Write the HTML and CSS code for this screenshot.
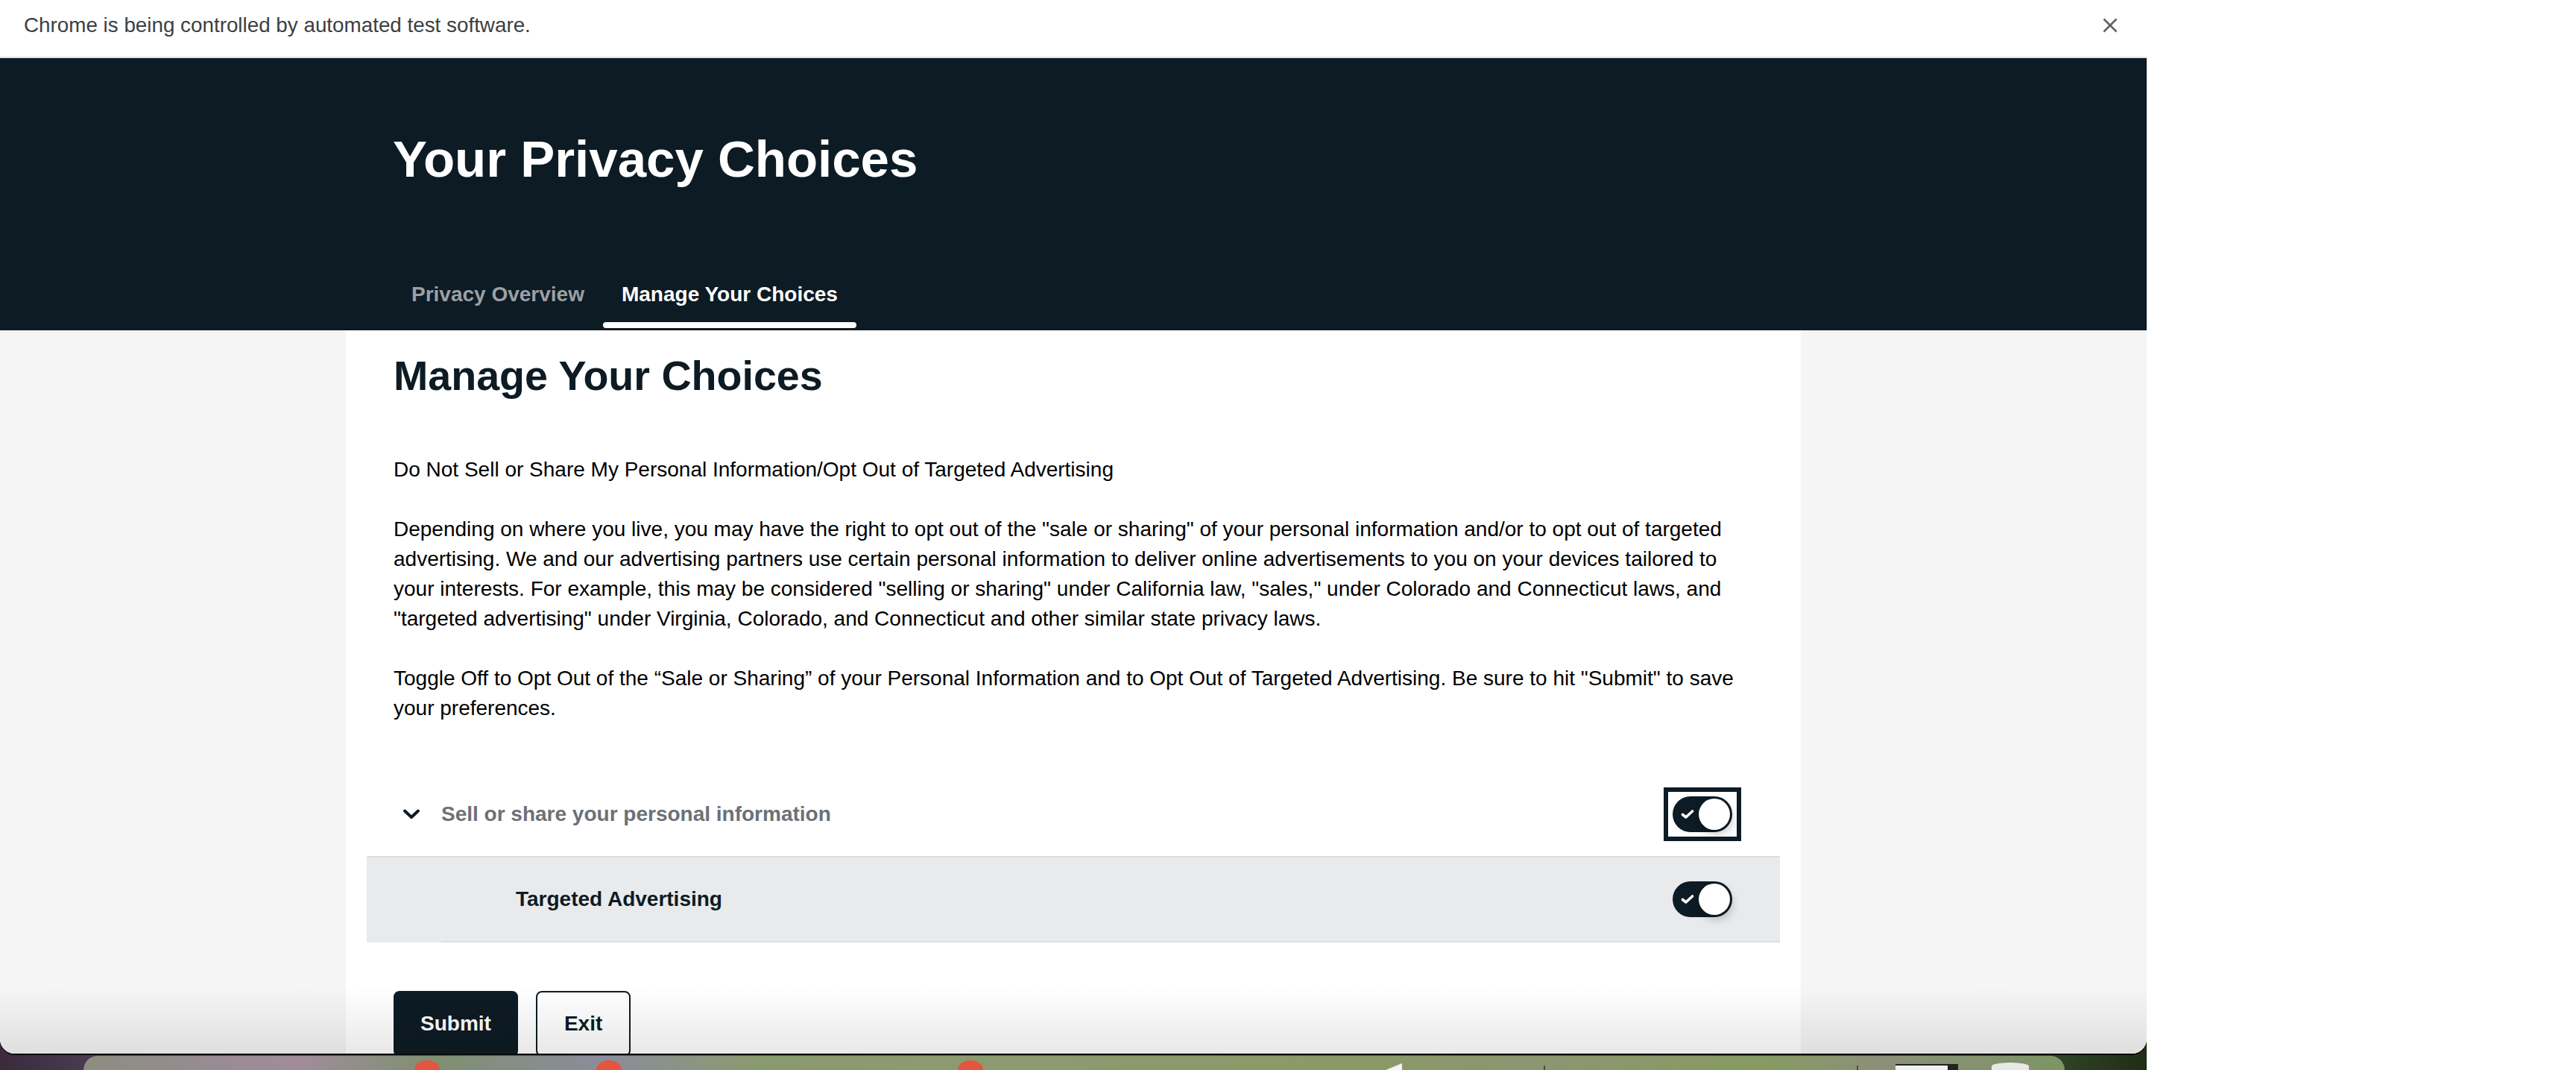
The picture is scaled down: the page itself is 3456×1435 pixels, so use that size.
FILE: index.html
```html
<!DOCTYPE html>
<html lang="en">
<head>
<meta charset="utf-8">
<title>Your Privacy Choices</title>
<link rel="stylesheet" href="styles.css">
</head>
<body>
<div class="screen">
  <div class="desk">
    <div class="window">
      <div class="infobar">
        <span>Chrome is being controlled by automated test software.</span>
        <svg class="close" width="20" height="20" viewBox="0 0 20 20"><path d="M1.5 1.5 L18.5 18.5 M18.5 1.5 L1.5 18.5" stroke="#5f6368" stroke-width="2.6" fill="none"/></svg>
      </div>
      <div class="viewport">
        <header class="hero">
          <div class="hero-inner">
            <h1>Your Privacy Choices</h1>
            <nav class="tabs">
              <a class="tab"><span class="tab-label">Privacy Overview</span></a>
              <a class="tab active"><span class="tab-label">Manage Your Choices</span></a>
            </nav>
          </div>
        </header>
        <main class="main">
          <section class="panel">
            <h2>Manage Your Choices</h2>
            <div class="intro">
              <p>Do Not Sell or Share My Personal Information/Opt Out of Targeted Advertising</p>
              <p>Depending on where you live, you may have the right to opt out of the "sale or sharing" of your personal information and/or to opt out of targeted advertising. We and our advertising partners use certain personal information to deliver online advertisements to you on your devices tailored to your interests. For example, this may be considered "selling or sharing" under California law, "sales," under Colorado and Connecticut laws, and "targeted advertising" under Virginia, Colorado, and Connecticut and other similar state privacy laws.</p>
              <p>Toggle Off to Opt Out of the “Sale or Sharing” of your Personal Information and to Opt Out of Targeted Advertising. Be sure to hit "Submit" to save your preferences.</p>
            </div>
            <div class="accordion">
              <div class="acc-head">
                <svg class="chevron" width="24" height="16" viewBox="0 0 24 16"><path d="M3 3.5 L12 12 L21 3.5" stroke="#0d1b24" stroke-width="4" fill="none" stroke-linecap="round" stroke-linejoin="round"/></svg>
                <span class="acc-title">Sell or share your personal information</span>
                <span class="focus-ring">
                  <span class="toggle">
                    <svg class="check" width="18" height="14" viewBox="0 0 18 14"><path d="M2.5 7.5 L6.8 11 L15.5 3" stroke="#fff" stroke-width="3.6" fill="none" stroke-linecap="round" stroke-linejoin="round"/></svg>
                    <span class="knob"></span>
                  </span>
                </span>
              </div>
              <div class="acc-body">
                <div class="subrow">
                  <span class="sub-title">Targeted Advertising</span>
                  <span class="toggle">
                    <svg class="check" width="18" height="14" viewBox="0 0 18 14"><path d="M2.5 7.5 L6.8 11 L15.5 3" stroke="#fff" stroke-width="3.6" fill="none" stroke-linecap="round" stroke-linejoin="round"/></svg>
                    <span class="knob"></span>
                  </span>
                </div>
              </div>
            </div>
            <div class="actions">
              <button class="btn btn-primary">Submit</button>
              <button class="btn btn-secondary">Exit</button>
            </div>
          </section>
        </main>
        <div class="fade"></div>
      </div>
    </div>
    <div class="strip">
      <div class="dock">
        <span class="drop drop-1"></span>
        <span class="drop drop-2"></span>
        <span class="drop drop-3"></span>
        <span class="peak"></span>
        <span class="sep sep-1"></span>
        <span class="sep sep-2"></span>
        <span class="mini-win"></span>
        <span class="mini-icon"></span>
      </div>
    </div>
  </div>
  <div class="outside"></div>
</div>
</body>
</html>
```

FILE: styles.css
```css
html, body {
  margin: 0;
  padding: 0;
}
body {
  width: 3456px;
  height: 1435px;
  overflow: hidden;
  background: #fff;
  font-family: "Liberation Sans", Arial, Helvetica, sans-serif;
}
.screen {
  display: flex;
  height: 1435px;
}
.desk {
  width: 2880px;
  flex: none;
  display: flex;
  flex-direction: column;
  background: linear-gradient(90deg, #3a2a3c 0, #4a3a50 112px, #55604a 1400px, #2f4224 2770px, #1e2d17 2880px);
}
.outside {
  flex: 1;
  background: #fff;
}
.window {
  height: 1413px;
  flex: none;
  display: flex;
  flex-direction: column;
  background: #fff;
  border-radius: 0 0 20px 20px;
  overflow: hidden;
  box-shadow: 0 2px 0 #0b0b0b;
  position: relative;
  z-index: 1;
}
.infobar {
  height: 68px;
  flex: none;
  border-bottom: 2px solid #dfe1e4;
  display: flex;
  align-items: center;
  justify-content: space-between;
  padding: 0 39px 8px 32px;
  font-size: 27.8px;
  color: #3c4043;
  background: #fff;
}
.close {
  display: block;
}
.viewport {
  flex: 1;
  position: relative;
  overflow: hidden;
  background: #f5f5f5;
}
.hero {
  background: #0d1b24;
  height: 365px;
}
.hero-inner {
  width: 1952px;
  margin: 0 auto;
  padding: 96px 64px 0 63px;
  box-sizing: border-box;
}
.hero h1 {
  margin: 0;
  font-size: 69px;
  line-height: 80px;
  font-weight: 700;
  color: #fff;
}
.tabs {
  display: flex;
  margin-top: 121px;
}
.tab {
  display: flex;
  flex-direction: column;
  font-size: 28px;
  line-height: 40px;
  font-weight: 700;
  color: #9ba0a5;
}
.tab-label {
  padding: 0 25px;
}
.tab::after {
  content: "";
  height: 8px;
  margin-top: 17px;
  border-radius: 4px;
  background: transparent;
}
.tab.active {
  color: #fff;
}
.tab.active::after {
  background: #fff;
}
.main {
  background: #f5f5f5;
}
.panel {
  width: 1952px;
  margin: 0 auto;
  min-height: 1200px;
  background: #fff;
  padding: 29px 64px 0;
  box-sizing: border-box;
  color: #0d1b24;
}
.panel h2 {
  margin: 0;
  font-size: 55.6px;
  line-height: 64px;
  font-weight: 700;
  color: #0d1b24;
}
.intro {
  margin-top: 74px;
}
.intro p {
  margin: 0;
  font-size: 28px;
  line-height: 40px;
  color: #000;
}
.intro p + p {
  margin-top: 40px;
}
.accordion {
  margin: 66px -36px 0 -36px;
}
.acc-head {
  display: flex;
  align-items: center;
  padding: 20px 52px 20px 48px;
  border-bottom: 2px solid #dcdddf;
}
.chevron {
  display: block;
  flex: none;
  margin-right: 28px;
}
.acc-title {
  flex: 1;
  font-size: 28px;
  line-height: 40px;
  font-weight: 700;
  color: #6b7177;
}
.focus-ring {
  flex: none;
  display: flex;
  border: 6px solid #0d1b24;
  padding: 6px;
}
.acc-body {
  background: #e9eaec;
  padding-left: 100px;
}
.subrow {
  display: flex;
  align-items: center;
  padding: 32px 64px 32px 100px;
  border-bottom: 2px solid #dcdddf;
}
.sub-title {
  flex: 1;
  font-size: 28px;
  line-height: 40px;
  font-weight: 700;
  color: #0d1b24;
}
.toggle {
  flex: none;
  width: 80px;
  height: 48px;
  border-radius: 24px;
  background: #0d1b24;
  display: flex;
  align-items: center;
  justify-content: space-between;
  padding: 0 3px 0 11px;
  box-sizing: border-box;
}
.check {
  display: block;
}
.knob {
  width: 42px;
  height: 42px;
  border-radius: 50%;
  background: #fff;
  box-shadow: 3px 6px 12px rgba(0, 0, 0, 0.22);
}
.actions {
  display: flex;
  gap: 24px;
  margin-top: 65px;
}
.btn {
  font-family: "Liberation Sans", Arial, Helvetica, sans-serif;
  font-size: 28px;
  line-height: 40px;
  font-weight: 700;
  padding: 22px 34px;
  border-radius: 8px;
  border: 2px solid #0d1b24;
  cursor: pointer;
}
.btn-primary {
  background: #0d1b24;
  color: #fff;
}
.btn-secondary {
  background: #fff;
  color: #0d1b24;
  padding-left: 36px;
  padding-right: 36px;
}
.fade {
  position: absolute;
  left: 0;
  right: 0;
  bottom: 0;
  height: 90px;
  background: linear-gradient(to bottom, rgba(0, 0, 0, 0), rgba(0, 0, 0, 0.09));
  pointer-events: none;
}
.strip {
  flex: 1;
  display: flex;
  padding: 3px 110px 0 112px;
}
.dock {
  flex: 1;
  display: flex;
  align-items: flex-end;
  overflow: hidden;
  border-radius: 40px 40px 0 0;
  background: linear-gradient(90deg, #8c8d80 0, #9a8b94 200px, #a08c9a 290px, #7f8f70 470px, #8b8c9c 700px, #8a9a70 900px, #8c9a70 1300px, #899a66 1700px, #8e9572 1950px, #869b62 2250px, #8c9078 2400px, #7d9566 2658px);
}
.drop {
  flex: none;
  width: 34px;
  height: 13px;
  background: #e4553f;
  border-radius: 50% 50% 0 0 / 100% 100% 0 0;
}
.drop-1 { margin-left: 444px; }
.drop-2 { margin-left: 210px; }
.drop-3 { margin-left: 451px; }
.peak {
  flex: none;
  width: 22px;
  height: 9px;
  margin-left: 540px;
  background: #f4f4f4;
  clip-path: polygon(100% 0, 100% 100%, 0 100%);
}
.sep {
  flex: none;
  width: 2px;
  height: 6px;
  background: #4a4a4a;
}
.sep-1 { margin-left: 190px; }
.sep-2 { margin-left: 418px; }
.mini-win {
  flex: none;
  width: 70px;
  height: 6px;
  margin-left: 50px;
  background: #f2f2f2;
  border-top: 2px solid #222;
  border-right: 14px solid #222;
}
.mini-icon {
  flex: none;
  width: 50px;
  height: 10px;
  margin-left: 45px;
  background: #e8e8e8;
  border-radius: 50% 50% 0 0;
}
```
